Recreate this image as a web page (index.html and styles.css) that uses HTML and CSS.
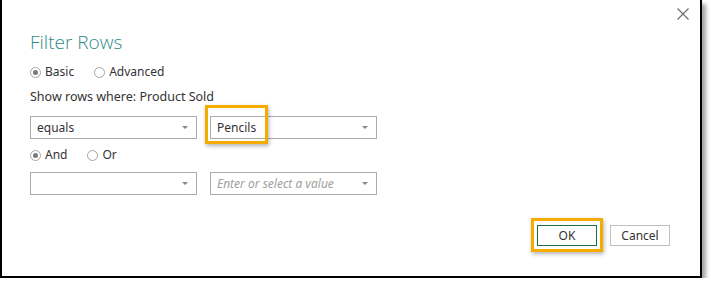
FILE: index.html
```html
<!DOCTYPE html>
<html lang="en">
<head>
    <meta charset="UTF-8">
    <title>Filter Rows</title>
    <link rel="stylesheet" href="styles.css">
</head>
<body>
    <div class="dialog">
        <button class="close" aria-label="Close">
            <svg width="12" height="12" viewBox="0 0 12 12"><path d="M0.5 0.5L11.5 11.5M11.5 0.5L0.5 11.5" stroke="#6b6b6b" stroke-width="1.1"/></svg>
        </button>
        <h1 class="title">Filter Rows</h1>
        <div class="radios">
            <label class="radio"><span class="dot checked"></span>Basic</label>
            <label class="radio"><span class="dot"></span>Advanced</label>
        </div>
        <p class="where">Show rows where: Product Sold</p>
        <div class="row">
            <div class="select">equals<span class="arrow"></span></div>
            <div class="select">Pencils<span class="arrow"></span><span class="highlight hl-pencils"></span></div>
        </div>
        <div class="radios small">
            <label class="radio"><span class="dot checked"></span>And</label>
            <label class="radio"><span class="dot"></span>Or</label>
        </div>
        <div class="row second">
            <div class="select"><span class="arrow"></span></div>
            <div class="select placeholder">Enter or select a value<span class="arrow"></span></div>
        </div>
        <div class="actions">
            <button class="btn ok">OK<span class="highlight hl-ok"></span></button>
            <button class="btn">Cancel</button>
        </div>
    </div>
</body>
</html>
```

FILE: styles.css
```css
body {
    margin: 0;
    background: #ffffff;
    font-family: 'Noto Sans', 'Open Sans', sans-serif;
    color: #333333;
}

.dialog {
    position: relative;
    width: 670px;
    height: 276px;
    padding: 0 0 0 28px;
    background: #ffffff;
    border: 2px solid #000000;
    border-top: none;
    box-shadow: 4px 4px 4px rgba(0, 0, 0, 0.35);
    box-sizing: content-box;
}

.close {
    position: absolute;
    top: 8px;
    right: 11px;
    padding: 0;
    border: none;
    background: none;
    line-height: 0;
}

.title {
    margin: 0;
    padding-top: 29px;
    font-family: 'Open Sans', sans-serif;
    font-size: 19px;
    font-weight: 300;
    line-height: 26px;
    color: #2f8a87;
}

.radios {
    display: flex;
    gap: 20px;
    margin-top: 9px;
    font-size: 12px;
    line-height: 16px;
    color: #333333;
}

.radios.small {
    margin-top: 8px;
}

.radio {
    display: flex;
    align-items: center;
    gap: 4px;
}

.dot {
    width: 9px;
    height: 9px;
    border: 1px solid #a6a6a6;
    border-radius: 50%;
    box-sizing: content-box;
    display: flex;
    align-items: center;
    justify-content: center;
}

.dot.checked::after {
    content: '';
    width: 5px;
    height: 5px;
    border-radius: 50%;
    background: #7a7a7a;
}

.where {
    margin: 8px 0 0;
    font-size: 12.5px;
    line-height: 18px;
    color: #333333;
}

.row {
    display: flex;
    gap: 13px;
    margin-top: 10px;
}

.row.second {
    margin-top: 9px;
}

.select {
    position: relative;
    width: 159px;
    height: 21px;
    padding-left: 6px;
    border: 1px solid #ababab;
    font-size: 12px;
    line-height: 21px;
    color: #333333;
}

.select.placeholder {
    font-style: italic;
    color: #a0a0a0;
}

.arrow {
    position: absolute;
    right: 8px;
    top: 9px;
    width: 0;
    height: 0;
    border-left: 3px solid transparent;
    border-right: 3px solid transparent;
    border-top: 3px solid #888888;
}

.highlight {
    position: absolute;
    border: 3px solid #f5ab00;
    box-shadow: 1px 2px 4px rgba(0, 0, 0, 0.3);
    pointer-events: none;
}

.hl-pencils {
    left: -6px;
    top: -12px;
    width: 57px;
    height: 33px;
}

.actions {
    position: absolute;
    right: 30px;
    bottom: 30px;
    display: flex;
    gap: 13px;
}

.btn {
    position: relative;
    width: 60px;
    height: 21px;
    padding: 0;
    border: 1px solid #c0c0c0;
    background: #ffffff;
    font-family: 'Noto Sans', 'Open Sans', sans-serif;
    font-size: 12px;
    color: #333333;
}

.btn.ok {
    border-color: #1f6e43;
}

.hl-ok {
    left: -7px;
    top: -8px;
    width: 66px;
    height: 28px;
}
```
